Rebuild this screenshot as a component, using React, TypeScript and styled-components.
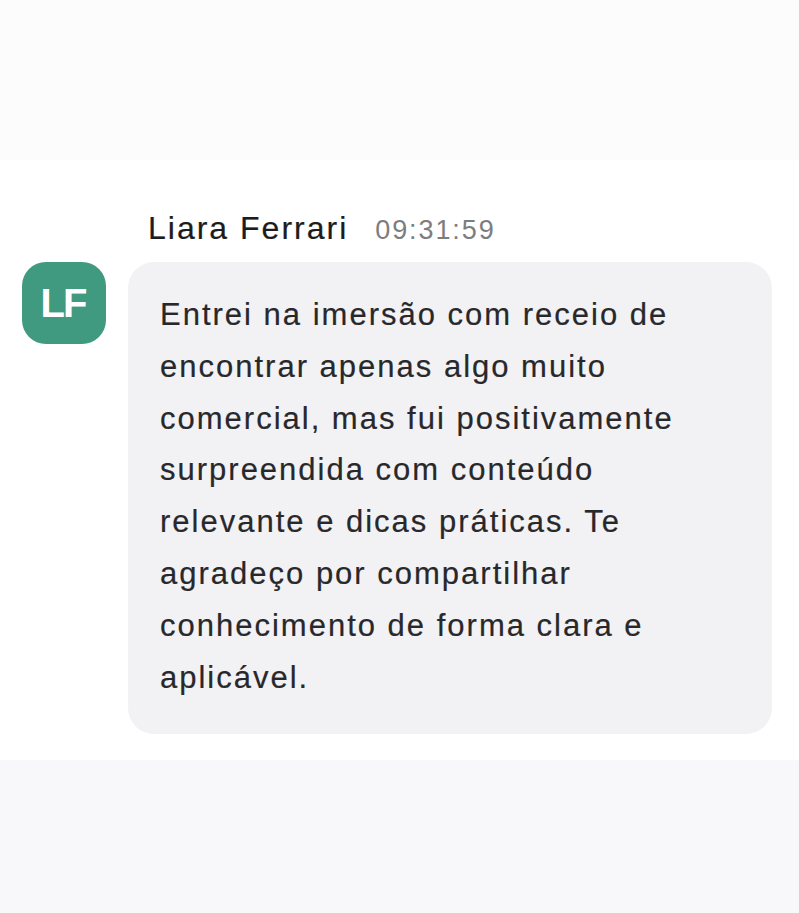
import React from "react";
import styled, { createGlobalStyle } from "styled-components";

const Global = createGlobalStyle`
  html, body { margin: 0; padding: 0; background: #fcfcfc; }
  body { font-family: "Liberation Sans", Arial, Helvetica, sans-serif; }
`;

const Page = styled.div`
  width: 799px;
  height: 913px;
  display: flex;
  flex-direction: column;
  background: #fcfcfc;
`;

const TopBand = styled.div`
  height: 160px;
  background: #fcfcfc;
`;

const Card = styled.div`
  height: 600px;
  background: #ffffff;
  box-sizing: border-box;
  padding: 46px 27px 0 22px;
  display: flex;
  align-items: flex-start;
  gap: 22px;
`;

const BottomBand = styled.div`
  flex: 1;
  background: #f8f8fa;
`;

const Avatar = styled.div`
  margin-top: 56px;
  width: 84px;
  height: 82px;
  flex: none;
  border-radius: 24px;
  background: #3f9a7f;
  color: #ffffff;
  font-weight: 700;
  font-size: 40px;
  letter-spacing: -2px;
  padding-right: 2px;
  box-sizing: border-box;
  display: flex;
  align-items: center;
  justify-content: center;
`;

const Column = styled.div`
  flex: 1;
  display: flex;
  flex-direction: column;
`;

const Header = styled.div`
  display: flex;
  align-items: baseline;
  gap: 27px;
  padding-left: 20px;
  height: 56px;
  padding-top: 4px;
  box-sizing: border-box;
`;

const Name = styled.span`
  font-size: 32px;
  color: #1c1c20;
  letter-spacing: 2px;
  -webkit-text-stroke: 0.2px #1c1c20;
`;

const Time = styled.span`
  font-size: 27px;
  color: #7d7d80;
  letter-spacing: 1.9px;
`;

const Bubble = styled.div`
  background: #f2f2f5;
  border-radius: 26px;
  padding: 27px 50px 31px 32px;
  font-size: 31px;
  line-height: 51.8px;
  color: #28282b;
  letter-spacing: 2px;
  -webkit-text-stroke: 0.2px #28282b;
`;

export default function App() {
  return (
    <Page>
      <Global />
      <TopBand />
      <Card>
        <Avatar>LF</Avatar>
        <Column>
          <Header>
            <Name>Liara Ferrari</Name>
            <Time>09:31:59</Time>
          </Header>
          <Bubble>
            Entrei na imersão com receio de encontrar apenas algo muito
            comercial, mas fui positivamente surpreendida com conteúdo
            relevante e dicas práticas. Te agradeço por compartilhar
            conhecimento de forma clara e aplicável.
          </Bubble>
        </Column>
      </Card>
      <BottomBand />
    </Page>
  );
}
